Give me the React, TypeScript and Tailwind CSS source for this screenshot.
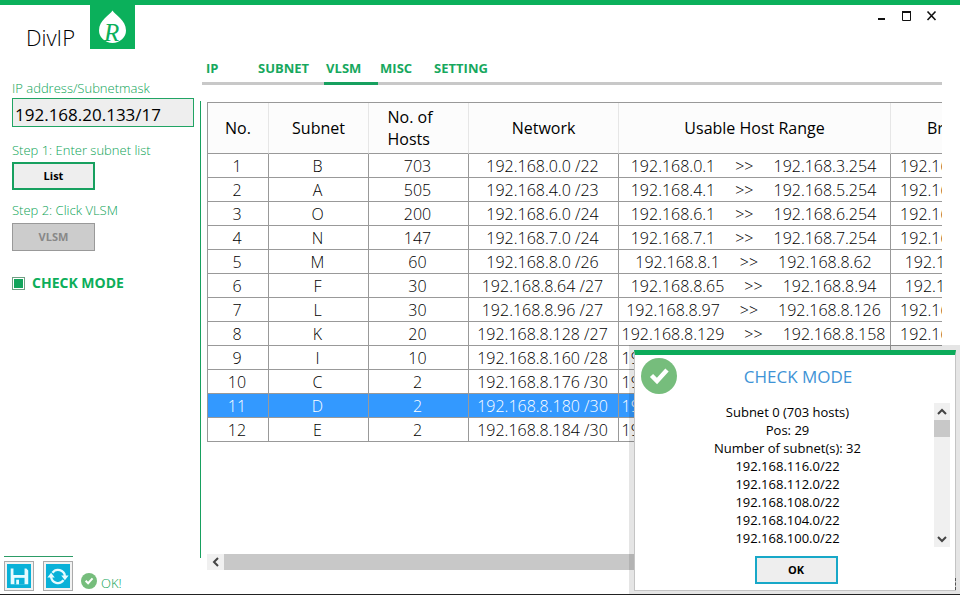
import React, { useState } from 'react';
import clsx from 'clsx';

type SubnetRow = {
  name: string;
  hosts: number;
  network: string;
  first: string;
  last: string;
  broadcast: string;
};

const rows: SubnetRow[] = [
  { name: 'B', hosts: 703, network: '192.168.0.0 /22', first: '192.168.0.1', last: '192.168.3.254', broadcast: '192.168.3.255' },
  { name: 'A', hosts: 505, network: '192.168.4.0 /23', first: '192.168.4.1', last: '192.168.5.254', broadcast: '192.168.5.255' },
  { name: 'O', hosts: 200, network: '192.168.6.0 /24', first: '192.168.6.1', last: '192.168.6.254', broadcast: '192.168.6.255' },
  { name: 'N', hosts: 147, network: '192.168.7.0 /24', first: '192.168.7.1', last: '192.168.7.254', broadcast: '192.168.7.255' },
  { name: 'M', hosts: 60, network: '192.168.8.0 /26', first: '192.168.8.1', last: '192.168.8.62', broadcast: '192.168.8.63' },
  { name: 'F', hosts: 30, network: '192.168.8.64 /27', first: '192.168.8.65', last: '192.168.8.94', broadcast: '192.168.8.95' },
  { name: 'L', hosts: 30, network: '192.168.8.96 /27', first: '192.168.8.97', last: '192.168.8.126', broadcast: '192.168.8.127' },
  { name: 'K', hosts: 20, network: '192.168.8.128 /27', first: '192.168.8.129', last: '192.168.8.158', broadcast: '192.168.8.159' },
  { name: 'I', hosts: 10, network: '192.168.8.160 /28', first: '192.168.8.161', last: '192.168.8.174', broadcast: '192.168.8.175' },
  { name: 'C', hosts: 2, network: '192.168.8.176 /30', first: '192.168.8.177', last: '192.168.8.178', broadcast: '192.168.8.179' },
  { name: 'D', hosts: 2, network: '192.168.8.180 /30', first: '192.168.8.181', last: '192.168.8.182', broadcast: '192.168.8.183' },
  { name: 'E', hosts: 2, network: '192.168.8.184 /30', first: '192.168.8.185', last: '192.168.8.186', broadcast: '192.168.8.187' },
];

const tabs = ['IP', 'SUBNET', 'VLSM', 'MISC', 'SETTING'];

const checkLines = [
  'Subnet 0 (703 hosts)',
  'Pos: 29',
  'Number of subnet(s): 32',
  '192.168.116.0/22',
  '192.168.112.0/22',
  '192.168.108.0/22',
  '192.168.104.0/22',
  '192.168.100.0/22',
];

const CheckCircle: React.FC<{ className?: string }> = ({ className }) => (
  <svg viewBox="0 0 36 36" className={className} aria-hidden="true">
    <circle cx="18" cy="18" r="18" fill="#76bd7c" />
    <path d="M10.500 17.500l5.500 5.500L26 12" fill="none" stroke="#fff" strokeWidth="4.500" />
  </svg>
);

const Chevron: React.FC<{ d: string }> = ({ d }) => (
  <svg viewBox="0 0 10 10" className="h-2.5 w-2.5" aria-hidden="true">
    <path d={d} fill="none" stroke="#444" strokeWidth="2" />
  </svg>
);

const Logo: React.FC = () => (
  <div className="h-11 w-[45px] bg-[#0bb05b]">
    <svg viewBox="0 0 45 44" className="h-full w-full" role="img" aria-label="DivIP logo">
      <path d="M22.500 5.500C25 10 36 15 36 25.500a13.500 12.500 0 0 1-27 0C9 15 20 10 22.500 5.500z" fill="#fff" />
      <text x="14" y="36" fontFamily="Liberation Serif, serif" fontStyle="italic" fontSize="25" fill="#0bb05b">
        R
      </text>
    </svg>
  </div>
);

const WindowControls: React.FC = () => (
  <div className="flex gap-[13px]">
    <button aria-label="Minimize" className="h-3 w-3">
      <svg viewBox="0 0 12 12" className="h-3 w-3">
        <path d="M2 9h7" stroke="#111" strokeWidth="2" />
      </svg>
    </button>
    <button aria-label="Maximize" className="h-3 w-3">
      <svg viewBox="0 0 12 12" className="h-3 w-3">
        <path d="M1.500 2v8.500h8V2" fill="none" stroke="#111" />
        <path d="M1 2h9" stroke="#111" strokeWidth="2" />
      </svg>
    </button>
    <button aria-label="Close" className="h-3 w-3">
      <svg viewBox="0 0 12 12" className="h-3 w-3">
        <path d="M1.500 1.500l8 8.500M9.500 1.500L1.500 10" stroke="#111" strokeWidth="1.600" />
      </svg>
    </button>
  </div>
);

const Sidebar: React.FC = () => {
  const [checkMode, setCheckMode] = useState(true);

  return (
    <aside className="flex w-[200px] shrink-0 flex-col">
      <div className="flex">
        <h1 className="w-[90px] pt-4 pl-[26px] text-[22px] leading-8 font-light text-black">DivIP</h1>
        <Logo />
      </div>

      <form className="flex flex-1 flex-col items-start pt-[25px] pr-1.5 pl-3 text-[13px] font-light text-[#0ba355]">
        <label htmlFor="ip" className="leading-5">IP address/Subnetmask</label>
        <input
          id="ip"
          defaultValue="192.168.20.133/17"
          className="h-[29px] w-full border border-[#21a464] bg-[#eee] px-0.5 pt-1 text-[17px] font-normal text-black outline-none"
        />
        <span className="mt-[13px] mb-0.5 leading-5">Step 1: Enter subnet list</span>
        <button type="button" className="h-7 w-[83px] border-2 border-[#17a05f] bg-[#eee] pt-px text-[11px] font-bold text-black">
          List
        </button>
        <span className="mt-2.5 mb-[3px] leading-5">Step 2: Click VLSM</span>
        <button type="button" disabled className="h-7 w-[83px] border border-[#999] bg-[#ccc] pt-px text-[11px] font-bold text-[#888]">
          VLSM
        </button>
        <label className="mt-[22px] flex items-center gap-[7px] text-sm leading-5 font-bold text-[#0cae5a]">
          <input
            type="checkbox"
            checked={checkMode}
            onChange={(e) => setCheckMode(e.target.checked)}
            className="h-[13px] w-[13px] appearance-none border border-[#6f9f83] bg-white p-px checked:bg-[#12a45b] checked:bg-clip-content"
          />
          CHECK MODE
        </label>
      </form>

      <div className="ml-1 flex pb-[3px]">
        <div className="flex gap-[9px] border-t border-[#2c9c66] pt-1">
          <button aria-label="Save" className="h-[30px] w-[30px] border border-[#aaa] bg-[#f2f2f2] p-0.5">
            <svg viewBox="0 0 26 26" className="h-full w-full">
              <path d="M0 0h26v26H0z" fill="#09b1d8" />
              <path d="M4 5h3v7h12V5h2l2 2v15H4z" fill="#e6fbff" />
              <path d="M8 15h11v7H8z" fill="#09b1d8" />
              <path d="M10 17h3v5h-3z" fill="#e6fbff" />
            </svg>
          </button>
          <button aria-label="Refresh" className="h-[30px] w-[30px] border border-[#aaa] bg-[#f2f2f2] p-0.5">
            <svg viewBox="0 0 26 26" className="h-full w-full">
              <path d="M0 0h26v26H0z" fill="#09b1d8" />
              <path d="M7 9.500a7.500 7.500 0 0 1 13.500 3.500M19 17.500A7.500 7.500 0 0 1 5.500 14" fill="none" stroke="#e6fbff" strokeWidth="2.500" />
              <path d="M16.500 12.500h8l-4 5zM1.500 14.500h8l-4-5z" fill="#e6fbff" />
            </svg>
          </button>
        </div>
        <div className="mt-auto flex items-center gap-1 pl-2">
          <CheckCircle className="h-4 w-4" />
          <span className="pt-1 text-[13px] leading-4 font-light text-[#0ba355]">OK!</span>
        </div>
      </div>
    </aside>
  );
};

const SubnetTable: React.FC = () => {
  const selected = 10;
  const head = 'border-r border-b border-r-[#e6e6e6] border-b-[#999] bg-[#fcfcfc] p-0 font-normal';

  return (
    <table className="w-[808px] table-fixed border-separate border-spacing-0 border-t border-l border-[#999] text-center text-base">
      <colgroup>
        <col className="w-[61px]" />
        <col className="w-[100px]" />
        <col className="w-[100px]" />
        <col className="w-[150px]" />
        <col className="w-[272px]" />
        <col className="w-[124px]" />
      </colgroup>
      <thead>
        <tr className="h-[51px] leading-[22px]">
          <th className={head}>No.</th>
          <th className={head}>Subnet</th>
          <th className={head}>
            <span className="inline-block w-[62px] text-left">No. of Hosts</span>
          </th>
          <th className={head}>Network</th>
          <th className={head}>Usable Host Range</th>
          <th className={clsx(head, 'pl-9 text-left')}>Broadcast</th>
        </tr>
      </thead>
      <tbody className="font-light">
        {rows.map((row, i) => (
          <tr
            key={row.name}
            className={clsx(
              'h-6 leading-[21px] whitespace-nowrap *:border-r *:border-b *:border-[#999] *:p-0 *:pt-0.5 *:pr-0.5',
              i === selected ? 'bg-[#3399ff] text-white' : 'text-black',
            )}
          >
            <td>{i + 1}</td>
            <td>{row.name}</td>
            <td>{row.hosts}</td>
            <td>{row.network}</td>
            <td>
              <div className="flex justify-center gap-5">
                <span>{row.first}</span>
                <span>&gt;&gt;</span>
                <span>{row.last}</span>
              </div>
            </td>
            <td>{row.broadcast}</td>
          </tr>
        ))}
      </tbody>
    </table>
  );
};

const CheckDialog: React.FC = () => (
  <div
    role="dialog"
    aria-labelledby="check-title"
    className="absolute right-1 bottom-[3px] w-[322px] border border-t-[5px] border-[#c4c4c4] border-t-[#0cab5a] bg-white shadow-[0_0_0_5px_rgba(0,0,0,0.1)]"
  >
    <div className="flex items-start pt-[3px] pl-1.5">
      <CheckCircle className="h-9 w-9" />
      <h2 id="check-title" className="flex-1 pt-[3px] pr-9 text-center text-[17px] leading-8 text-[#3e93d6]">
        CHECK MODE
      </h2>
    </div>
    <div className="mt-[9px] mr-[5px] flex h-36">
      <ul className="flex-1 pl-1.5 text-center text-[13px] leading-[18px] text-black">
        {checkLines.map((line) => (
          <li key={line}>{line}</li>
        ))}
      </ul>
      <div className="flex w-4 flex-col items-center justify-between bg-[#f0f0f0]">
        <button aria-label="Scroll up" className="flex h-[17px] w-full items-center justify-center">
          <Chevron d="M1 7l4-4 4 4" />
        </button>
        <div className="mb-auto h-[17px] w-full bg-[#c8c8c8]" />
        <button aria-label="Scroll down" className="flex h-[17px] w-full items-center justify-center">
          <Chevron d="M1 3l4 4 4-4" />
        </button>
      </div>
    </div>
    <div className="flex justify-center pt-[9px] pb-1.5 pl-0.5">
      <button className="h-7 w-[83px] border-2 border-[#18a8c8] bg-[#eee] pt-px text-[11px] font-bold text-black">OK</button>
    </div>
    {/* resize grip */}
    <div className="absolute -right-px bottom-0 h-3 border-r border-dashed border-[#555]" />
  </div>
);

export default function App() {
  const [tab, setTab] = useState('VLSM');

  return (
    <div className="relative flex min-h-screen overflow-hidden border-t-[5px] border-b border-t-[#0bb05b] border-b-[#222] bg-white font-['Open_Sans',sans-serif]">
      <Sidebar />

      <main className="flex min-w-0 flex-1 flex-col pr-[18px]">
        <div className="flex justify-end pt-[5px] pr-1">
          <WindowControls />
        </div>

        <nav className="mt-8 ml-0.5 flex border-b-[3px] border-[#c8c8c8] pl-0.5">
          {tabs.map((name) => (
            <button
              key={name}
              onClick={() => setTab(name)}
              className={clsx(
                '-mb-[3px] min-w-[54px] border-b-[3px] pt-[5px] pr-[15px] pb-[5px] pl-0.5 text-left text-[13px] leading-[18px] font-bold text-[#17a85e] first:min-w-[52px]',
                tab === name ? 'border-[#17a05f]' : 'border-transparent',
              )}
            >
              {name}
            </button>
          ))}
        </nav>

        <div className="mt-4 mb-6 flex min-h-0 flex-1">
          <div className="mb-3 w-px bg-[#17a05f]" />
          <div className="ml-1.5 flex min-w-0 flex-1 flex-col justify-between overflow-hidden pt-px">
            <SubnetTable />
            <div className="flex h-4 bg-[#c8c8c8]">
              <button aria-label="Scroll left" className="flex w-[17px] items-center justify-center bg-[#f0f0f0]">
                <Chevron d="M7 1L3 5l4 4" />
              </button>
            </div>
          </div>
        </div>
      </main>

      <CheckDialog />
    </div>
  );
}
